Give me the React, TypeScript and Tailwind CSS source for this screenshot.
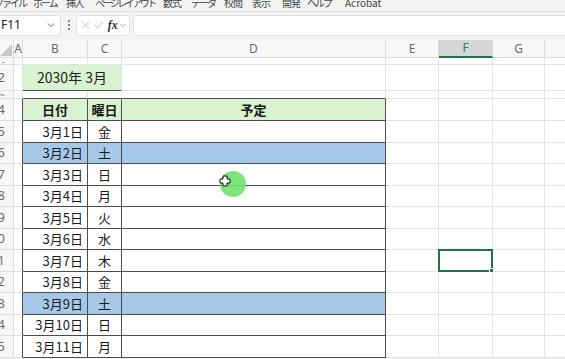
import React from "react";

// ribbon tabs: [label, margin-left, width, tracking]
const MENU: [string, string, string, string][] = [
  ["ファイル", "ml-[-6px]", "w-[28px]", "tracking-[-2px]"],
  ["ホーム", "ml-[11px]", "w-[21px]", "tracking-[-2px]"],
  ["挿入", "ml-[12px]", "w-[16px]", "tracking-[-1.5px]"],
  ["ページレイアウト", "ml-[13px]", "w-[56px]", "tracking-[-2.5px]"],
  ["数式", "ml-[12px]", "w-[17px]", "tracking-[-1px]"],
  ["データ", "ml-[11px]", "w-[20px]", "tracking-[-2px]"],
  ["校閲", "ml-[13px]", "w-[17px]", "tracking-[-1px]"],
  ["表示", "ml-[11px]", "w-[18px]", "tracking-[-1px]"],
  ["開発", "ml-[12px]", "w-[17px]", "tracking-[-1px]"],
  ["ヘルプ", "ml-[8px]", "w-[19px]", "tracking-[-2px]"],
  ["Acrobat", "ml-[19px]", "w-[32px]", "tracking-[0px]"],
];

// column widths: row header, A, B, C, D, E, F, G, H
const COLS = [14, 9, 65, 34, 264, 53, 54, 52, 30];

const DAYS = [
  ["3月1日", "金"],
  ["3月2日", "土"],
  ["3月3日", "日"],
  ["3月4日", "月"],
  ["3月5日", "火"],
  ["3月6日", "水"],
  ["3月7日", "木"],
  ["3月8日", "金"],
  ["3月9日", "土"],
  ["3月10日", "日"],
  ["3月11日", "月"],
];

const JP = "font-['Noto_Sans_CJK_JP','Noto_Sans',sans-serif]";

function ColHeader() {
  const letters = ["", "A", "B", "C", "D", "E", "F", "G", ""];
  return (
    <div className="flex h-[18px] bg-[#f7f7f7]">
      {letters.map((l, i) => (
        <div
          key={i}
          style={{ width: COLS[i] }}
          className={
            "relative flex shrink-0 items-center justify-center border-r border-b border-[#dcdcdc] text-[12px] font-['Noto_Sans',sans-serif] " +
            (l === "F"
              ? "bg-[#d6d6d6] border-b-2 border-b-[#217346] text-[#3e7a58]"
              : "text-[#6b6b6b]")
          }
        >
          {i === 0 ? (
            <svg width="14" height="18" className="absolute left-0 top-0">
              <path d="M12 4 L12 16 L0 16 Z" fill="#c8c8c8" />
            </svg>
          ) : (
            l
          )}
        </div>
      ))}
    </div>
  );
}

type Cell = {
  text?: string;
  bg?: string;
  align?: string;
  bold?: boolean;
  darkR?: boolean;
  darkB?: boolean;
  big?: boolean;
  selected?: boolean;
  w?: number;
};

function Row({ label, h, cells, small }: { label: string; h: number; cells: Cell[]; small?: boolean }) {
  let col = 1;
  return (
    <div className="flex" style={{ height: h }}>
      <div
        style={{ width: COLS[0] }}
        className={
          "flex shrink-0 items-center justify-end overflow-visible border-r border-b border-[#dcdcdc] bg-[#f7f7f7] pr-[8px] text-[#6b6b6b] font-['Noto_Sans',sans-serif] whitespace-nowrap leading-none " +
          (small ? "text-[9px]" : "text-[13px]")
        }
      >
        {label}
      </div>
      {cells.map((c, i) => {
        const w = c.w ?? COLS[col];
        col += c.w ? 2 : 1;
        return (
          <div
            key={i}
            style={{ width: w }}
            className={
              "relative flex shrink-0 items-center whitespace-nowrap border-r border-b " +
              JP +
              " " +
              (c.bg ?? "bg-white") +
              " " +
              (c.darkR ? "border-r-[#4d4d4d]" : "border-r-[#e3e3e3]") +
              " " +
              (c.darkB ? "border-b-[#4d4d4d]" : "border-b-[#e3e3e3]") +
              " " +
              (c.align ?? "justify-center") +
              " " +
              (c.big ? "text-[14px] text-[#222]" : "text-[13px] text-[#1a1a1a]") +
              (c.bold ? " font-bold text-[12px]" : "")
            }
          >
            {c.text}
            {c.selected && (
              <div className="absolute inset-[-1px] border-2 border-[#217346]">
                <div className="absolute right-[-3px] bottom-[-3px] h-[5px] w-[5px] bg-[#217346] border border-white" />
              </div>
            )}
          </div>
        );
      })}
    </div>
  );
}

const blank = (): Cell => ({});

export default function App() {
  const ROW_H = 21.5;
  return (
    <div className="relative h-[359px] w-[565px] overflow-hidden bg-[#f3f3f3]">
      {/* ribbon tabs, cut off at the top */}
      <div className={"flex h-[12px] items-start overflow-hidden border-b border-[#e2e2e2] text-[10px] text-[#444] " + JP}>
        {MENU.map(([t, m, w, tr]) => (
          <span key={t} className={m + " " + w + " " + tr + " shrink-0 whitespace-nowrap mt-[-5px] leading-[16px]"}>
            {t}
          </span>
        ))}
      </div>

      {/* formula bar */}
      <div className="flex h-[24px] items-center gap-[3px] pt-[2px]">
        <div className="flex h-[21px] w-[61px] items-center justify-between rounded-r-[4px] border border-l-0 border-[#e0e0e0] bg-white pr-[5px] pl-[1px] text-[12px] text-[#222] font-['Noto_Sans',sans-serif]">
          <span>F11</span>
          <svg width="8" height="6" viewBox="0 0 8 6">
            <path d="M1 1.5 L4 4.5 L7 1.5" stroke="#666" strokeWidth="1" fill="none" />
          </svg>
        </div>
        <div className="flex w-[9px] flex-col items-center gap-[2px]">
          <span className="h-[2px] w-[2px] rounded-full bg-[#666]" />
          <span className="h-[2px] w-[2px] rounded-full bg-[#666]" />
          <span className="h-[2px] w-[2px] rounded-full bg-[#666]" />
        </div>
        <div className="flex h-[21px] w-[54px] items-center gap-[4px] rounded-[4px] border border-[#e0e0e0] bg-white px-[4px]">
          <svg width="10" height="10" viewBox="0 0 10 10">
            <path d="M1 1 L9 9 M9 1 L1 9" stroke="#bdbdbd" strokeWidth="1" />
          </svg>
          <svg width="11" height="10" viewBox="0 0 11 10">
            <path d="M1 5 L4 8.5 L10 1" stroke="#bdbdbd" strokeWidth="1" fill="none" />
          </svg>
          <span className="font-['Liberation_Serif',serif] text-[12px] font-bold italic text-[#333] leading-none">
            fx
          </span>
          <svg width="6" height="5" viewBox="0 0 6 5" className="ml-[-2px]">
            <path d="M0.5 1 L3 3.5 L5.5 1" stroke="#888" strokeWidth="0.9" fill="none" />
          </svg>
        </div>
        <div className="h-[21px] flex-1 rounded-l-[4px] border border-r-0 border-[#e0e0e0] bg-white" />
      </div>

      {/* grid */}
      <div className="mt-[4px]">
        <ColHeader />
        <Row label="-" small h={7} cells={Array.from({ length: 8 }, blank)} />
        <Row
          label="2"
          h={26}
          cells={[
            blank(),
            { bg: "bg-[#d9f2d0]", darkB: true, big: true, text: "2030年 3月", w: COLS[2] + COLS[3] },
            blank(),
            blank(),
            blank(),
            blank(),
            blank(),
          ]}
        />
        <Row
          label="~"
          small
          h={8}
          cells={[blank(), { darkB: true }, { darkB: true }, { darkB: true }, blank(), blank(), blank(), blank()]}
        />
        <Row
          label="4"
          h={22}
          cells={[
            { darkR: true },
            { bg: "bg-[#d9f2d0]", darkR: true, darkB: true, bold: true, text: "日付" },
            { bg: "bg-[#d9f2d0]", darkR: true, darkB: true, bold: true, text: "曜日" },
            { bg: "bg-[#d9f2d0]", darkR: true, darkB: true, bold: true, text: "予定" },
            blank(),
            blank(),
            blank(),
            blank(),
          ]}
        />
        {DAYS.map(([d, w], i) => {
          const sat = w === "土";
          const bg = sat ? "bg-[#a6c8e8]" : "bg-white";
          return (
            <Row
              key={d}
              label={String(i + 5)}
              h={ROW_H}
              cells={[
                { darkR: true },
                { bg, darkR: true, darkB: true, text: d, align: "justify-end pr-[4px]" },
                { bg, darkR: true, darkB: true, text: w },
                { bg, darkR: true, darkB: true },
                blank(),
                { selected: i === 6 },
                blank(),
                blank(),
              ]}
            />
          );
        })}
      </div>

      {/* pointer highlight */}
      <div className="absolute left-[220px] top-[171px] h-[26px] w-[26px] rounded-full bg-[#6fe06f] opacity-90" />
      <svg className="absolute left-[219px] top-[175px]" width="12" height="12" viewBox="0 0 12 12">
        <path
          d="M4 1 H8 V4 H11 V8 H8 V11 H4 V8 H1 V4 H4 Z"
          fill="white"
          stroke="#111"
          strokeWidth="1"
        />
      </svg>
    </div>
  );
}
